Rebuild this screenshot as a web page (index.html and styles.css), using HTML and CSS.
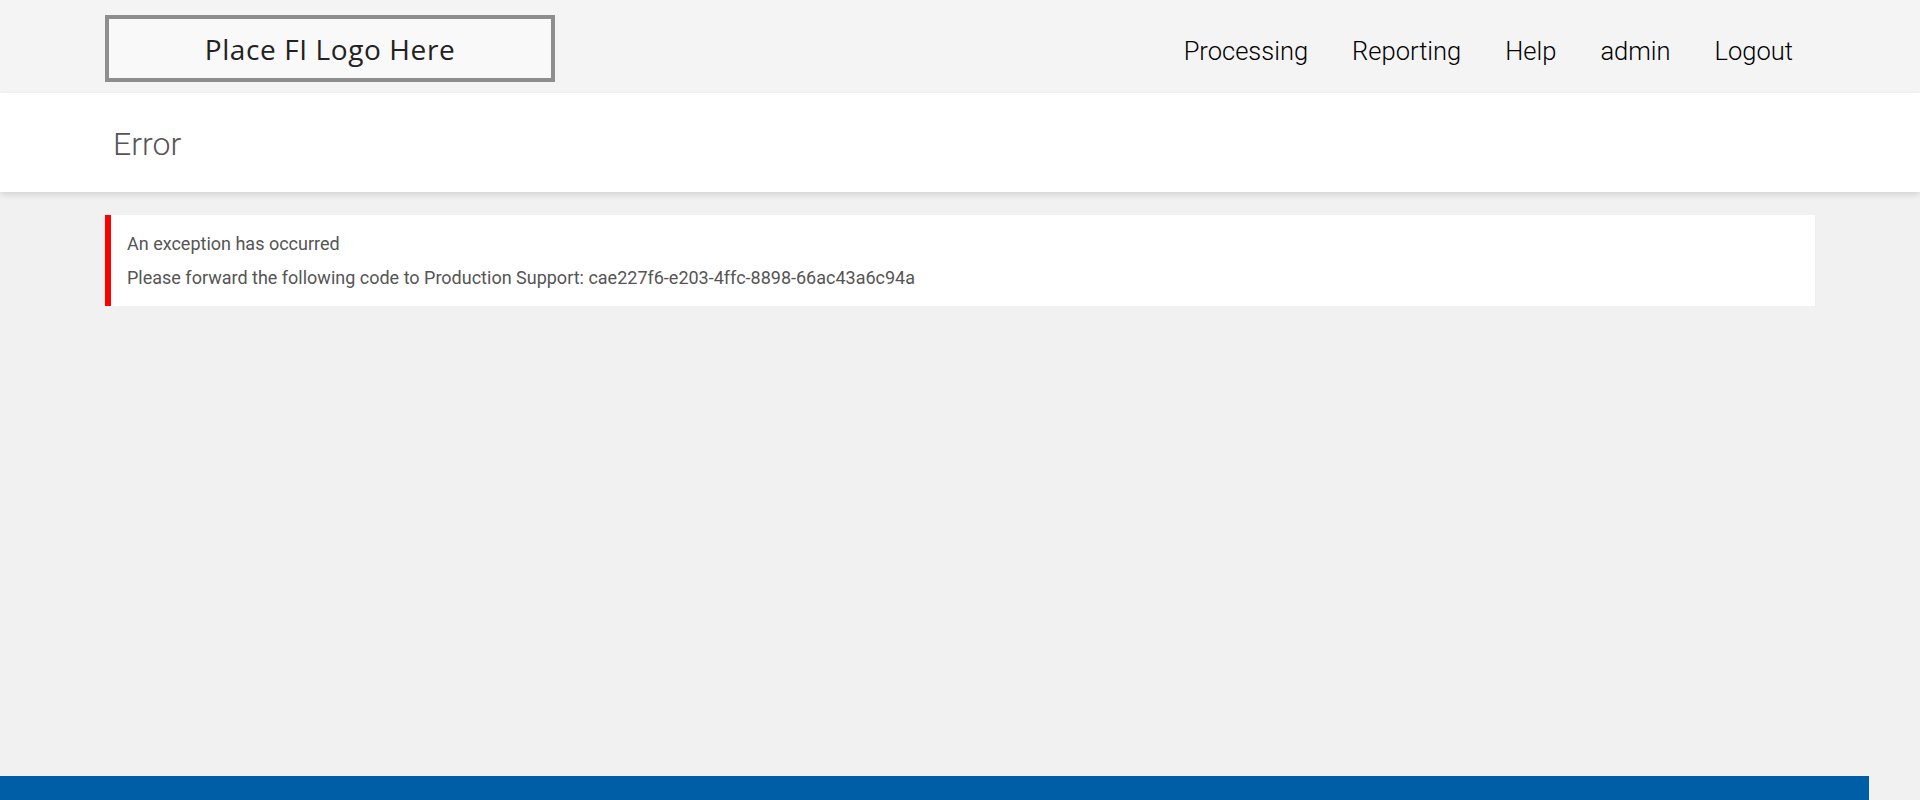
FILE: index.html
```html
<!DOCTYPE html>
<html>
<head>
<meta charset="utf-8">
<title>Error</title>
<link rel="stylesheet" href="styles.css">
</head>
<body>
<div class="page">
  <header class="topbar">
    <div class="container topbar-inner">
      <div class="logo"><span>Place FI Logo Here</span></div>
      <nav class="nav">
        <a href="#">Processing</a>
        <a href="#">Reporting</a>
        <a href="#">Help</a>
        <a href="#">admin</a>
        <a href="#">Logout</a>
      </nav>
    </div>
  </header>
  <section class="titlebar">
    <div class="container">
      <h1>Error</h1>
    </div>
  </section>
  <main class="content">
    <div class="container">
      <div class="alert">
        <p>An exception has occurred</p>
        <p>Please forward the following code to Production Support: cae227f6-e203-4ffc-8898-66ac43a6c94a</p>
      </div>
    </div>
  </main>
  <footer class="footer"></footer>
</div>
</body>
</html>
```

FILE: styles.css
```css
html, body {
  margin: 0;
  padding: 0;
  height: 100%;
}
body {
  background: #f1f1f1;
  font-family: Roboto, "Liberation Sans", sans-serif;
  overflow: hidden;
}
.page {
  display: flex;
  flex-direction: column;
  height: 100vh;
}
.container {
  width: 1710px;
  margin: 0 auto;
}
.topbar {
  background: #f4f4f4;
  height: 93px;
  flex: none;
}
.topbar-inner {
  display: flex;
  justify-content: space-between;
  align-items: flex-start;
}
.logo {
  margin-top: 15px;
  width: 442px;
  height: 59px;
  border: 4px solid #8e8e8e;
  background: #f9f9f9;
  display: flex;
  align-items: center;
  justify-content: center;
  font-family: "Open Sans", "Noto Sans", sans-serif;
  font-size: 28px;
  font-weight: 500;
  color: #222;
  letter-spacing: 0.6px;
}
.nav {
  display: flex;
  margin-top: 34px;
}
.nav a {
  font-size: 25.5px;
  font-weight: 300;
  color: #000;
  text-decoration: none;
  padding: 0 22px;
  line-height: 34px;
}
.titlebar {
  background: #fff;
  height: 99px;
  flex: none;
  box-shadow: 0 3px 6px rgba(0, 0, 0, 0.12);
  position: relative;
  z-index: 1;
}
.titlebar h1 {
  margin: 0;
  padding: 31px 0 0 8px;
  font-size: 32px;
  font-weight: 300;
  color: #555;
  line-height: 40px;
}
.content {
  flex: 1;
  padding-top: 23px;
}
.alert {
  background: #fff;
  border-left: 6px solid #ff0000;
  padding: 17px 16px 16px;
}
.alert p {
  margin: 0 0 10px;
  font-size: 18px;
  line-height: 24px;
  color: #555;
}
.alert p:last-child {
  margin-bottom: 0;
}
.footer {
  flex: none;
  height: 24px;
  width: 1869px;
  background: #005ea7;
}
```
